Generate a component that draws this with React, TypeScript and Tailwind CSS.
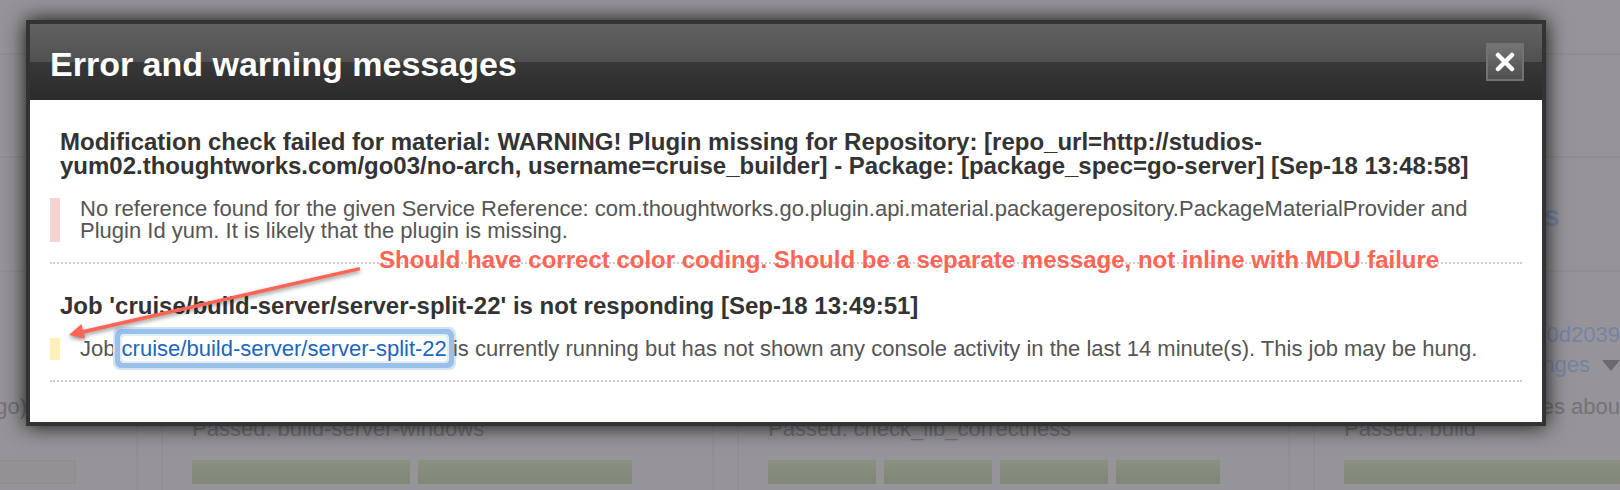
import type { ReactNode } from "react";

function Bars({ widths }: { widths: string[] }) {
  return (
    <div className="mt-5 flex gap-2">
      {widths.map((w, i) => (
        <div key={i} className={`h-6 shrink-0 bg-linear-to-b from-[#8b9180] to-[#808677] ${w}`} />
      ))}
    </div>
  );
}

function Card({ label, meta, children }: { label?: string; meta?: ReactNode; children: ReactNode }) {
  return (
    <section className="h-80 w-[553px] shrink-0 border-x-2 border-[#929095] px-[29px]">
      <div className="h-[146px]">{meta}</div>
      <p className="h-[22px] text-[22px] leading-[22px] text-[#747277]">{label}</p>
      {children}
    </section>
  );
}

function Backdrop() {
  return (
    <div aria-hidden="true" className="absolute inset-0 overflow-hidden bg-[#979499]">
      <div className="h-[55px] border-b-2 border-[#918e93]" />
      <div className="h-[103px] border-b-2 border-[#918e93]" />
      <div className="flex h-[114px] justify-end border-b-2 border-[#918e93] pt-[42px] pr-[60px]">
        <span className="text-[30px] leading-8 font-bold text-[#7484a3]">s</span>
      </div>
      <div className="-ml-[415px] flex gap-[23px]">
        <Card
          meta={<p className="pt-[124px] pr-20 text-right text-[22px] leading-[22px] text-[#747277]">go)</p>}
        >
          <div className="mt-5 h-6 w-[460px] border-2 border-[#918e92] bg-[#949195]" />
        </Card>
        <Card label="Passed: build-server-windows">
          <Bars widths={["w-[218px]", "w-[214px]"]} />
        </Card>
        <Card label="Passed: check_lib_correctness">
          <Bars widths={["w-[108px]", "w-[108px]", "w-[108px]", "w-[104px]"]} />
        </Card>
        <Card
          label="Passed: build"
          meta={
            <div className="w-[276px] pt-[52px] text-right text-[22px] leading-[22px] text-[#7484a3]">
              <p>60d2039</p>
              <p className="mt-2 flex items-center justify-end gap-3">
                nges
                <svg viewBox="0 0 18 11" className="h-[11px] w-[18px] fill-[#6b696d]">
                  <path d="M0 0h18l-9 11z" />
                </svg>
              </p>
              <p className="mt-5 text-[#747277]">es abou</p>
            </div>
          }
        >
          <Bars widths={["w-[440px]"]} />
        </Card>
      </div>
    </div>
  );
}

function Message({ title, tone, children }: { title: ReactNode; tone: string; children: ReactNode }) {
  return (
    <article className="border-b-2 border-dotted border-[#cccccc] pt-[30px] pb-5">
      <h3 className="px-[10px] text-[24px] leading-6 font-bold text-[#333333]">{title}</h3>
      <p className={`mt-5 border-l-10 pl-5 text-[22px] leading-[22px] text-[#555555] ${tone}`}>{children}</p>
    </article>
  );
}

function Annotation() {
  return (
    <>
      <p className="absolute top-[145px] left-[349px] text-[24px] leading-[30px] font-bold whitespace-nowrap text-[#ff6454]">
        Should have correct color coding. Should be a separate message, not inline with MDU failure
      </p>
      <svg
        viewBox="0 0 300 80"
        aria-hidden="true"
        className="absolute top-[162px] left-[34px] h-20 w-[300px] fill-[#ff6454] drop-shadow-[0_2px_2px_rgba(0,0,0,0.45)]"
      >
        <path d="M295.500 5l.6 3.200L20 71.500l1 5L5 73l12.500-11 1.300 6z" />
      </svg>
    </>
  );
}

export default function App() {
  return (
    <main className="relative min-h-screen overflow-hidden pt-5 pr-[74px] pb-16 pl-[26px] font-['Liberation_Sans',Arial,sans-serif]">
      <Backdrop />
      <div
        role="dialog"
        aria-labelledby="dialog-title"
        className="relative border-4 border-[#333333] bg-white shadow-[0_0_20px_rgba(0,0,0,0.9)]"
      >
        <header className="flex h-[76px] items-center justify-between bg-[linear-gradient(#626262,#505050_50%,#383838_50%,#2b2b2b)] pr-[18px] pl-5">
          <h2 id="dialog-title" className="pt-1 text-[34px] leading-10 font-bold text-white">
            Error and warning messages
          </h2>
          <button
            type="button"
            aria-label="Close"
            className="flex size-[38px] items-center justify-center border-2 border-[#727272] bg-linear-to-b from-[#747474] to-[#505050]"
          >
            <svg viewBox="0 0 20 20" className="size-5 stroke-white stroke-[4.500]" strokeLinecap="round">
              <path d="M3 3l14 14M17 3L3 17" />
            </svg>
          </button>
        </header>
        <div className="relative px-5 pb-10">
          <Message
            tone="border-[#f6d3d3]"
            title="Modification check failed for material: WARNING! Plugin missing for Repository: [repo_url=http://studios-yum02.thoughtworks.com/go03/no-arch, username=cruise_builder] - Package: [package_spec=go-server] [Sep-18 13:48:58]"
          >
            No reference found for the given Service Reference:
            com.thoughtworks.go.plugin.api.material.packagerepository.PackageMaterialProvider and Plugin Id yum. It is
            likely that the plugin is missing.
          </Message>
          <Message
            tone="border-[#ffefb8]"
            title="Job 'cruise/build-server/server-split-22' is not responding [Sep-18 13:49:51]"
          >
            Job{" "}
            <a
              href="#job"
              className="rounded-[2px] text-[#1c65bf] shadow-[0_0_0_2px_#e4eefa,0_0_0_7px_#98c0e8,0_0_0_9px_#d4e4f4]"
            >
              cruise/build-server/server-split-22
            </a>{" "}
            is currently running but has not shown any console activity in the last 14 minute(s). This job may be hung.
          </Message>
          <Annotation />
        </div>
      </div>
    </main>
  );
}
